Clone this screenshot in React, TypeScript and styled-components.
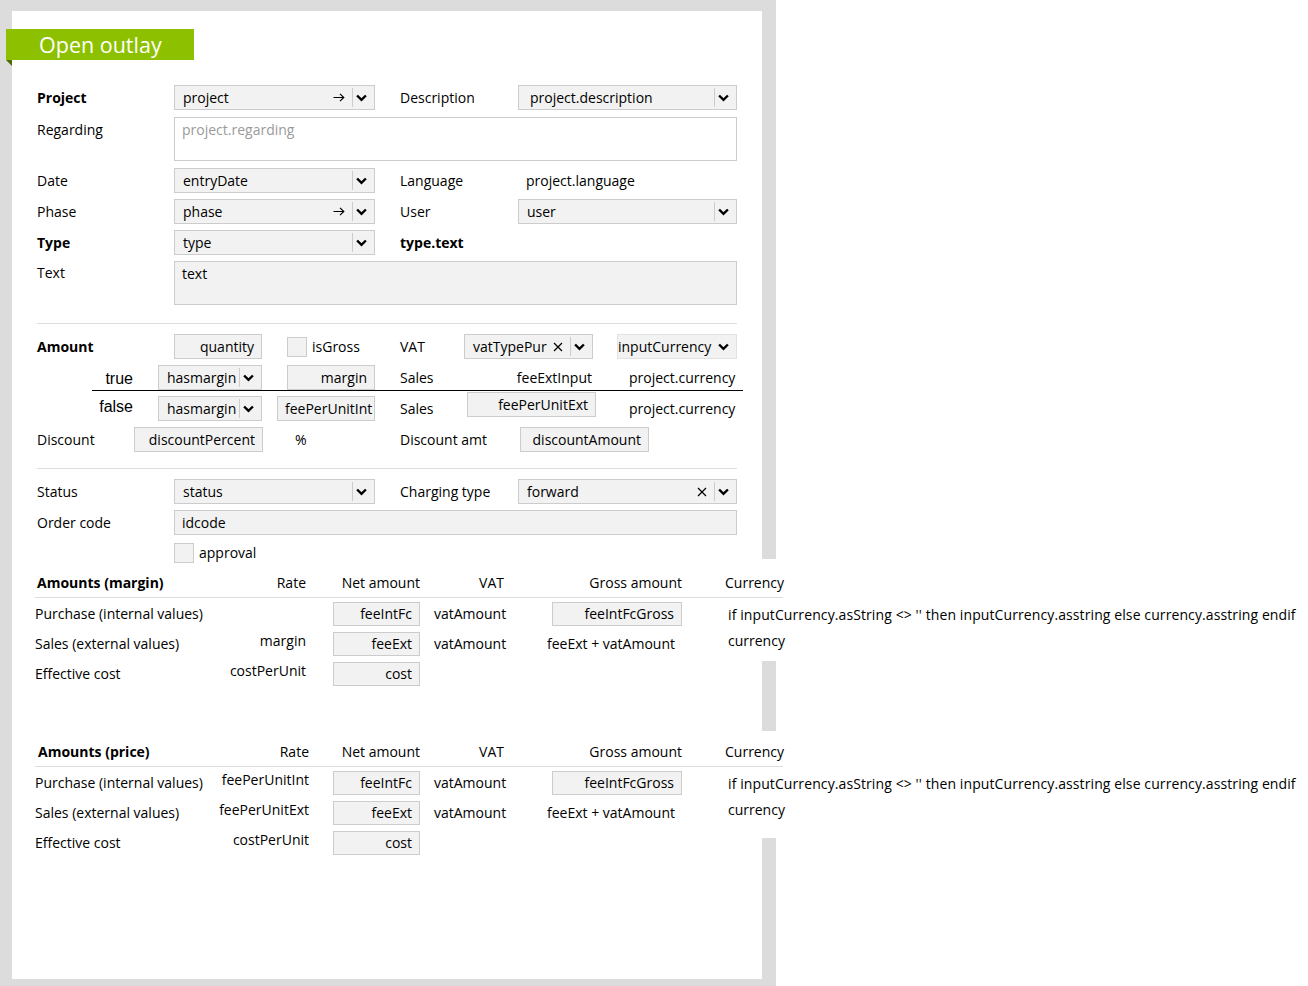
import React from "react";
import styled, { createGlobalStyle } from "styled-components";

const Global = createGlobalStyle`
  html, body { margin: 0; padding: 0; background: #fff; }
  body {
    font-family: "Open Sans", "Segoe UI", sans-serif;
    font-size: 14px;
    color: #000;
  }
  * { box-sizing: border-box; }
`;

const Frame = styled.div`
  width: 776px;
  height: 986px;
  border-style: solid;
  border-color: #dcdcdc;
  border-width: 11px 14px 7px 12px;
  background: #fff;
`;

const Ribbon = styled.div`
  position: relative;
  margin: 18px 0 0 -6px;
  width: 188px;
  height: 31px;
  padding-left: 33px;
  background: #8dc100;
  color: #fff;
  font-size: 21.5px;
  line-height: 32px;
  white-space: nowrap;
  &::after {
    content: "";
    position: absolute;
    left: 0;
    top: 31px;
    width: 0;
    height: 0;
    border-left: 6px solid transparent;
    border-top: 6px solid #4d6b00;
  }
`;

const Form = styled.div`
  margin: 25px 0 0 25px;
  width: 700px;
  display: flex;
  flex-direction: column;
`;

const Row = styled.div<{ $h?: number; $mt?: number; $top?: boolean }>`
  display: flex;
  align-items: ${(p) => (p.$top ? "flex-start" : "center")};
  height: ${(p) => p.$h ?? 25}px;
  margin-top: ${(p) => p.$mt ?? 0}px;
  flex: none;
`;

const Cell = styled.div<{
  $w?: number;
  $ml?: number;
  $right?: boolean;
  $bold?: boolean;
  $pt?: number;
  $pl?: number;
}>`
  flex: none;
  width: ${(p) => (p.$w ? `${p.$w}px` : "auto")};
  margin-left: ${(p) => p.$ml ?? 0}px;
  padding-top: ${(p) => p.$pt ?? 0}px;
  padding-left: ${(p) => p.$pl ?? 0}px;
  text-align: ${(p) => (p.$right ? "right" : "left")};
  font-weight: ${(p) => (p.$bold ? 700 : 400)};
  line-height: 20px;
  white-space: nowrap;
`;

const BoolTag = styled.div<{ $shift: number }>`
  flex: none;
  width: 96px;
  text-align: right;
  font-family: "Liberation Sans", Arial, sans-serif;
  font-size: 16px;
  line-height: 18px;
  padding-top: ${(p) => (p.$shift > 0 ? p.$shift * 2 : 0)}px;
  padding-bottom: ${(p) => (p.$shift < 0 ? -p.$shift * 2 : 0)}px;
`;

const SelectBox = styled.div<{ $w: number; $ml?: number; $native?: boolean }>`
  flex: none;
  display: flex;
  align-items: center;
  width: ${(p) => p.$w}px;
  height: 25px;
  margin-left: ${(p) => p.$ml ?? 0}px;
  background: #f2f2f2;
  border: 1px solid ${(p) => (p.$native ? "#e2e2e2" : "#cccccc")};
`;

const SelectValue = styled.span<{ $pl: number }>`
  flex: 1;
  min-width: 0;
  padding-left: ${(p) => p.$pl}px;
  line-height: 20px;
  white-space: nowrap;
  overflow: hidden;
`;

const SelectIcon = styled.span`
  display: flex;
  align-items: center;
  margin-right: 7px;
`;

const DropButton = styled.span<{ $sep: boolean }>`
  flex: none;
  display: flex;
  align-items: center;
  align-self: stretch;
  width: 22px;
  margin: 2px 0;
  padding-left: 3px;
  border-left: 1px solid ${(p) => (p.$sep ? "#cccccc" : "transparent")};
`;

const InputBox = styled.div<{
  $w: number;
  $ml?: number;
  $left?: boolean;
  $h?: number;
  $raise?: number;
}>`
  flex: none;
  width: ${(p) => p.$w}px;
  height: ${(p) => p.$h ?? 25}px;
  margin-left: ${(p) => p.$ml ?? 0}px;
  align-self: ${(p) => (p.$raise ? "flex-start" : "auto")};
  margin-top: ${(p) => (p.$raise ? -p.$raise : 0)}px;
  padding: 0 7px 0 7px;
  background: #f2f2f2;
  border: 1px solid #cccccc;
  text-align: ${(p) => (p.$left ? "left" : "right")};
  line-height: ${(p) => (p.$h ?? 25) - 2}px;
  white-space: nowrap;
`;

const TextArea = styled.div<{ $w: number; $h: number; $filled?: boolean }>`
  flex: none;
  width: ${(p) => p.$w}px;
  height: ${(p) => p.$h}px;
  padding: 2px 7px;
  line-height: 20px;
  background: ${(p) => (p.$filled ? "#f2f2f2" : "#ffffff")};
  border: 1px solid #cccccc;
`;

const Placeholder = styled.span`
  color: #9a9a9a;
`;

const CheckBox = styled.div<{ $ml?: number }>`
  flex: none;
  width: 20px;
  height: 20px;
  margin-left: ${(p) => p.$ml ?? 0}px;
  background: #f2f2f2;
  border: 1px solid #cccccc;
`;

const Divider = styled.div<{ $mt: number }>`
  flex: none;
  height: 1px;
  margin-top: ${(p) => p.$mt}px;
  background: #dddddd;
`;

const BlackRule = styled.div`
  flex: none;
  width: 651px;
  height: 1px;
  margin-left: 55px;
  background: #000;
`;

/* Tables */
const COLS = "185px 93px 114px 93px 200px 63px";

const Table = styled.div<{ $mt: number }>`
  margin: ${(p) => p.$mt}px 0 0 23px;
  width: 748px;
`;

const HeadRow = styled.div`
  display: grid;
  grid-template-columns: ${COLS};
  height: 35px;
  border-bottom: 1px solid #dddddd;
`;

const HeadCell = styled.div<{
  $right?: boolean;
  $pr?: number;
  $pl?: number;
  $bold?: boolean;
  $white?: boolean;
  $up?: number;
}>`
  display: flex;
  align-items: flex-end;
  justify-content: ${(p) => (p.$right ? "flex-end" : "flex-start")};
  padding: 0 ${(p) => p.$pr ?? 0}px 4px ${(p) => p.$pl ?? 0}px;
  line-height: 20px;
  font-weight: ${(p) => (p.$bold ? 700 : 400)};
  white-space: nowrap;
  background: ${(p) => (p.$white ? "#fff" : "transparent")};
  box-shadow: ${(p) => (p.$up ? `0 -${p.$up}px 0 0 #fff` : "none")};
`;

const BodyRow = styled.div`
  display: grid;
  grid-template-columns: ${COLS};
  height: 30px;
`;

const BodyCell = styled.div<{
  $right?: boolean;
  $pr?: number;
  $pl?: number;
  $pt?: number;
  $white?: boolean;
  $ext?: number;
  $spaced?: boolean;
}>`
  display: flex;
  align-items: flex-start;
  justify-content: ${(p) => (p.$right ? "flex-end" : "flex-start")};
  padding: ${(p) => p.$pt ?? 4}px ${(p) => p.$pr ?? 0}px 0 ${(p) => p.$pl ?? 0}px;
  line-height: 24px;
  white-space: nowrap;
  letter-spacing: ${(p) => (p.$spaced ? "0.1px" : "normal")};
  background: ${(p) => (p.$white ? "#fff" : "transparent")};
  box-shadow: ${(p) => (p.$ext ? `0 ${p.$ext}px 0 0 #fff` : "none")};
`;

/* Icons */
const Chevron = () => (
  <svg width="11" height="8" viewBox="0 0 11 8">
    <path d="M1.1 1.5 L5.5 5.9 L9.9 1.5" fill="none" stroke="#000" strokeWidth="2.4" />
  </svg>
);

const ArrowRight = () => (
  <svg width="12" height="9" viewBox="0 0 12 9">
    <path d="M0.5 4.5 H11 M7 0.9 L10.8 4.5 L7 8.1" fill="none" stroke="#000" strokeWidth="1.15" />
  </svg>
);

const Cross = () => (
  <svg width="10" height="10" viewBox="0 0 10 10">
    <path d="M1 1 L9 9 M9 1 L1 9" fill="none" stroke="#000" strokeWidth="1.2" />
  </svg>
);

type SelectProps = {
  w: number;
  ml?: number;
  value: string;
  pl?: number;
  arrow?: boolean;
  clear?: boolean;
  native?: boolean;
};

const Select = ({ w, ml, value, pl = 8, arrow, clear, native }: SelectProps) => (
  <SelectBox $w={w} $ml={ml} $native={native}>
    <SelectValue $pl={native ? 0 : pl}>{value}</SelectValue>
    {arrow && (
      <SelectIcon>
        <ArrowRight />
      </SelectIcon>
    )}
    {clear && (
      <SelectIcon>
        <Cross />
      </SelectIcon>
    )}
    <DropButton $sep={!native}>
      <Chevron />
    </DropButton>
  </SelectBox>
);

const LONG_CURRENCY =
  "if inputCurrency.asString <> '' then inputCurrency.asstring else currency.asstring endif";

type AmountRow = {
  label: string;
  rate: string;
  net: string;
  vat: string;
  gross: string;
  grossInput: boolean;
  currency?: string;
  currencyTop?: number;
  ext?: number;
};

const AmountTable = ({
  title,
  mt,
  ratePr,
  titlePl,
  up,
  rows,
}: {
  title: string;
  mt: number;
  ratePr: number;
  titlePl: number;
  up: number;
  rows: AmountRow[];
}) => (
  <Table $mt={mt}>
    <HeadRow>
      <HeadCell $bold $pl={titlePl}>
        {title}
      </HeadCell>
      <HeadCell $right $pr={ratePr}>
        Rate
      </HeadCell>
      <HeadCell $right $pr={7}>
        Net amount
      </HeadCell>
      <HeadCell $right $pr={16}>
        VAT
      </HeadCell>
      <HeadCell $right $pr={38}>
        Gross amount
      </HeadCell>
      <HeadCell $pl={5} $white $up={up}>
        Currency
      </HeadCell>
    </HeadRow>
    {rows.map((r) => (
      <BodyRow key={r.label}>
        <BodyCell>{r.label}</BodyCell>
        <BodyCell $right $pr={ratePr} $pt={1}>
          {r.rate}
        </BodyCell>
        <BodyCell $right $pr={7}>
          <InputBox $w={87} $h={24}>
            {r.net}
          </InputBox>
        </BodyCell>
        <BodyCell $pl={7}>{r.vat}</BodyCell>
        {r.grossInput ? (
          <BodyCell $right $pr={38}>
            <InputBox $w={130} $h={24}>
              {r.gross}
            </InputBox>
          </BodyCell>
        ) : (
          <BodyCell $right $pr={45}>
            {r.gross}
          </BodyCell>
        )}
        {r.currency !== undefined ? (
          <BodyCell
            $pl={8}
            $pt={r.currencyTop}
            $white
            $ext={r.ext}
            $spaced={r.currency.length > 20}
          >
            {r.currency}
          </BodyCell>
        ) : (
          <BodyCell />
        )}
      </BodyRow>
    ))}
  </Table>
);

export default function App() {
  return (
    <>
      <Global />
      <Frame>
        <Ribbon>Open outlay</Ribbon>
        <Form>
          <Row>
            <Cell $w={137} $bold>
              Project
            </Cell>
            <Select w={201} value="project" arrow />
            <Cell $w={118} $ml={25}>
              Description
            </Cell>
            <Select w={219} value="project.description" pl={11} />
          </Row>
          <Row $h={44} $mt={7} $top>
            <Cell $w={137} $pt={3}>
              Regarding
            </Cell>
            <TextArea $w={563} $h={44}>
              <Placeholder>project.regarding</Placeholder>
            </TextArea>
          </Row>
          <Row $mt={7}>
            <Cell $w={137}>Date</Cell>
            <Select w={201} value="entryDate" />
            <Cell $w={118} $ml={25}>
              Language
            </Cell>
            <Cell $pl={8}>project.language</Cell>
          </Row>
          <Row $mt={6}>
            <Cell $w={137}>Phase</Cell>
            <Select w={201} value="phase" arrow />
            <Cell $w={118} $ml={25}>
              User
            </Cell>
            <Select w={219} value="user" />
          </Row>
          <Row $mt={6}>
            <Cell $w={137} $bold>
              Type
            </Cell>
            <Select w={201} value="type" />
            <Cell $w={118} $ml={25} $bold>
              type.text
            </Cell>
          </Row>
          <Row $h={44} $mt={6} $top>
            <Cell $w={137} $pt={2}>
              Text
            </Cell>
            <TextArea $w={563} $h={44} $filled>
              text
            </TextArea>
          </Row>

          <Divider $mt={18} />

          <Row $mt={10}>
            <Cell $w={137} $bold>
              Amount
            </Cell>
            <InputBox $w={88}>quantity</InputBox>
            <CheckBox $ml={25} />
            <Cell $w={88} $ml={5}>
              isGross
            </Cell>
            <Cell $w={64}>VAT</Cell>
            <Select w={129} value="vatTypePur" clear />
            <Select w={120} ml={24} value="inputCurrency" native />
          </Row>
          <Row $mt={6}>
            <BoolTag $shift={1}>true</BoolTag>
            <Select w={104} ml={25} value="hasmargin" />
            <InputBox $w={88} $ml={25}>
              margin
            </InputBox>
            <Cell $w={64} $ml={25}>
              Sales
            </Cell>
            <Cell $w={128} $right>
              feeExtInput
            </Cell>
            <Cell $ml={37}>project.currency</Cell>
          </Row>
          <BlackRule />
          <Row $mt={5}>
            <BoolTag $shift={-2}>false</BoolTag>
            <Select w={104} ml={25} value="hasmargin" />
            <InputBox $w={98} $ml={15}>
              feePerUnitInt
            </InputBox>
            <Cell $w={64} $ml={25}>
              Sales
            </Cell>
            <InputBox $w={129} $ml={3} $raise={4}>
              feePerUnitExt
            </InputBox>
            <Cell $ml={33}>project.currency</Cell>
          </Row>
          <Row $mt={6}>
            <Cell $w={97}>Discount</Cell>
            <InputBox $w={129}>discountPercent</InputBox>
            <Cell $w={105} $ml={32}>
              %
            </Cell>
            <Cell $w={120}>Discount amt</Cell>
            <InputBox $w={129}>discountAmount</InputBox>
          </Row>

          <Divider $mt={16} />

          <Row $mt={10}>
            <Cell $w={137}>Status</Cell>
            <Select w={201} value="status" />
            <Cell $w={118} $ml={25}>
              Charging type
            </Cell>
            <Select w={219} value="forward" clear />
          </Row>
          <Row $mt={6}>
            <Cell $w={137}>Order code</Cell>
            <InputBox $w={563} $left>
              idcode
            </InputBox>
          </Row>
          <Row $mt={8} $h={20}>
            <CheckBox $ml={137} />
            <Cell $ml={5}>approval</Cell>
          </Row>
        </Form>

        <AmountTable
          title="Amounts (margin)"
          mt={0}
          ratePr={7}
          titlePl={2}
          up={4}
          rows={[
            {
              label: "Purchase (internal values)",
              rate: "",
              net: "feeIntFc",
              vat: "vatAmount",
              gross: "feeIntFcGross",
              grossInput: true,
              currency: LONG_CURRENCY,
              currencyTop: 5,
            },
            {
              label: "Sales (external values)",
              rate: "margin",
              net: "feeExt",
              vat: "vatAmount",
              gross: "feeExt + vatAmount",
              grossInput: false,
              currency: "currency",
              currencyTop: 1,
              ext: 3,
            },
            {
              label: "Effective cost",
              rate: "costPerUnit",
              net: "cost",
              vat: "",
              gross: "",
              grossInput: false,
            },
          ]}
        />

        <AmountTable
          title="Amounts (price)"
          mt={44}
          ratePr={4}
          titlePl={3}
          up={1}
          rows={[
            {
              label: "Purchase (internal values)",
              rate: "feePerUnitInt",
              net: "feeIntFc",
              vat: "vatAmount",
              gross: "feeIntFcGross",
              grossInput: true,
              currency: LONG_CURRENCY,
              currencyTop: 5,
            },
            {
              label: "Sales (external values)",
              rate: "feePerUnitExt",
              net: "feeExt",
              vat: "vatAmount",
              gross: "feeExt + vatAmount",
              grossInput: false,
              currency: "currency",
              currencyTop: 1,
              ext: 11,
            },
            {
              label: "Effective cost",
              rate: "costPerUnit",
              net: "cost",
              vat: "",
              gross: "",
              grossInput: false,
            },
          ]}
        />
      </Frame>
    </>
  );
}
